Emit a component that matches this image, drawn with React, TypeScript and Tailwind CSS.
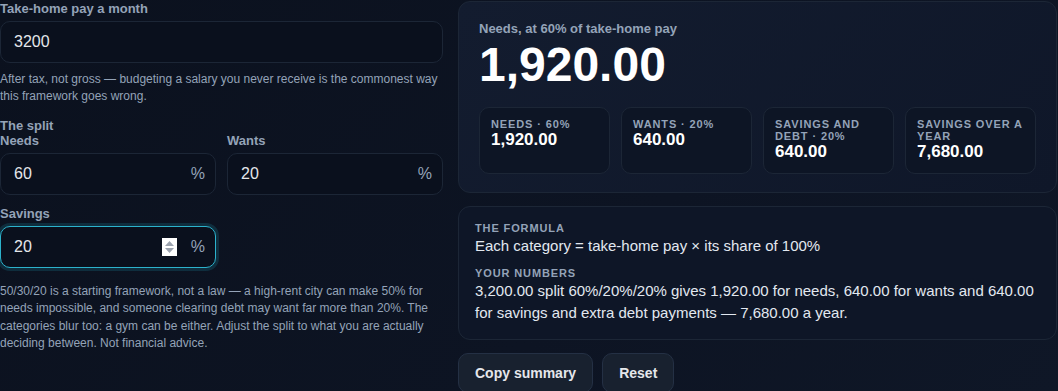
import React, { useState } from 'react';

const fmt = (n: number) =>
  n.toLocaleString('en-US', { minimumFractionDigits: 2, maximumFractionDigits: 2 });

interface PercentFieldProps {
  label: string;
  value: string;
  focused?: boolean;
  onChange: (v: string) => void;
}

const PercentField: React.FC<PercentFieldProps> = ({ label, value, focused, onChange }) => (
  <div className="flex flex-col">
    <span className="text-[13px] font-bold leading-[15px] text-[#94a3b8]">{label}</span>
    <div
      className={`mt-[5px] flex h-[42px] items-center rounded-[10px] border bg-[#0a101d] pl-[13px] pr-[10px] ${
        focused
          ? 'border-[#2cb2cc] shadow-[0_0_0_3px_rgba(34,211,238,0.14)]'
          : 'border-[#1c2636]'
      }`}
    >
      <input
        value={value}
        onChange={(e) => onChange(e.target.value)}
        className="w-full min-w-0 bg-transparent text-[16px] text-[#e5e7eb] outline-none"
      />
      {focused && (
        // stand-in for the native number spinner
        <span className="mr-[14px] flex h-[18px] w-[15px] shrink-0 flex-col items-center justify-center gap-[2px] bg-white">
          <svg width="9" height="5" viewBox="0 0 9 5">
            <path d="M0 5 L4.5 0 L9 5 Z" fill="#9ca3af" />
          </svg>
          <svg width="9" height="5" viewBox="0 0 9 5">
            <path d="M0 0 L4.5 5 L9 0 Z" fill="#9ca3af" />
          </svg>
        </span>
      )}
      <span className="text-[16px] text-[#94a3b8]">%</span>
    </div>
  </div>
);

const StatCard: React.FC<{ label: string; value: string }> = ({ label, value }) => (
  <div className="flex flex-col rounded-[10px] border border-[#1c2636] bg-[#0d1525] pl-[11px] pr-[7px] pt-[10px] pb-[11px]">
    <span className="text-[11px] font-semibold uppercase leading-[12px] tracking-[0.08em] text-[#94a3b8]">
      {label}
    </span>
    <span className="text-[17px] font-bold leading-[20px] text-white">{value}</span>
  </div>
);

export default function App() {
  const [pay, setPay] = useState('3200');
  const [needs, setNeeds] = useState('60');
  const [wants, setWants] = useState('20');
  const [savings, setSavings] = useState('20');

  const p = parseFloat(pay) || 0;
  const n = parseFloat(needs) || 0;
  const w = parseFloat(wants) || 0;
  const s = parseFloat(savings) || 0;
  const needsAmt = (p * n) / 100;
  const wantsAmt = (p * w) / 100;
  const savingsAmt = (p * s) / 100;

  const reset = () => {
    setPay('3200');
    setNeeds('60');
    setWants('20');
    setSavings('20');
  };

  return (
    <div
      className="flex min-h-[391px] w-full gap-[15px] bg-[linear-gradient(135deg,#0b111e_0%,#0d1423_60%,#0f1727_100%)] pr-[1px] text-[#e5e7eb]"
      style={{ fontFamily: '"Liberation Sans", Arial, sans-serif' }}
    >
      {/* inputs */}
      <div className="flex w-[443px] shrink-0 flex-col">
        <label className="text-[13px] font-bold leading-[18px] text-[#94a3b8]">Take-home pay a month</label>
        <input
          value={pay}
          onChange={(e) => setPay(e.target.value)}
          className="mt-[3px] h-[42px] rounded-[10px] border border-[#1c2636] bg-[#0a101d] px-[13px] text-[16px] text-[#e5e7eb] outline-none"
        />
        <p className="mt-[8px] text-[12px] leading-[17px] text-[#94a3b8]">
          After tax, not gross — budgeting a salary you never receive is the commonest way this framework goes wrong.
        </p>

        <span className="mt-[13px] text-[13px] font-bold leading-[15px] text-[#94a3b8]">The split</span>
        <div className="grid grid-cols-2 gap-x-[11px] gap-y-[11px]">
          <PercentField label="Needs" value={needs} onChange={setNeeds} />
          <PercentField label="Wants" value={wants} onChange={setWants} />
          <PercentField label="Savings" value={savings} onChange={setSavings} focused />
        </div>

        <p className="mt-[15px] text-[12px] leading-[17.3px] text-[#94a3b8]">
          50/30/20 is a starting framework, not a law — a high-rent city can make 50% for needs impossible, and
          someone clearing debt may want far more than 20%. The categories blur too: a gym can be either. Adjust the
          split to what you are actually deciding between. Not financial advice.
        </p>
      </div>

      {/* results */}
      <div className="flex flex-1 flex-col gap-[13px]">
        <div className="mt-[1px] rounded-[12px] border border-[#1c2636] bg-[linear-gradient(135deg,#131c2f_0%,#0f1729_100%)] px-[20px] pt-[19px] pb-[18px]">
          <div className="text-[13px] font-bold leading-[16px] text-[#94a3b8]">Needs, at {n}% of take-home pay</div>
          <div className="mt-[4px] text-[48px] font-bold leading-none text-white">{fmt(needsAmt)}</div>
          <div className="mt-[18px] grid grid-cols-4 gap-[11px]">
            <StatCard label={`Needs · ${n}%`} value={fmt(needsAmt)} />
            <StatCard label={`Wants · ${w}%`} value={fmt(wantsAmt)} />
            <StatCard label={`Savings and debt · ${s}%`} value={fmt(savingsAmt)} />
            <StatCard label="Savings over a year" value={fmt(savingsAmt * 12)} />
          </div>
        </div>

        <div className="rounded-[12px] border border-[#1c2636] bg-[#0e1627] pl-[16px] pr-[12px] pt-[14px] pb-[15px]">
          <div className="text-[11px] font-bold uppercase leading-[14px] tracking-[0.08em] text-[#94a3b8]">
            The formula
          </div>
          <div className="text-[15px] leading-[22px] text-[#e2e8f0]">
            Each category = take-home pay × its share of 100%
          </div>
          <div className="mt-[9px] text-[11px] font-bold uppercase leading-[14px] tracking-[0.08em] text-[#94a3b8]">
            Your numbers
          </div>
          <div className="text-[15px] leading-[22px] text-[#e2e8f0]">
            {fmt(p)} split {n}%/{w}%/{s}% gives {fmt(needsAmt)} for needs, {fmt(wantsAmt)} for wants and{' '}
            {fmt(savingsAmt)} for savings and extra debt payments — {fmt(savingsAmt * 12)} a year.
          </div>
        </div>

        <div className="flex gap-[9px]">
          <button className="h-[40px] rounded-[10px] border border-[#243044] bg-[#18212f] px-[16px] text-[14px] font-bold text-[#e5e7eb]">
            Copy summary
          </button>
          <button
            onClick={reset}
            className="h-[40px] rounded-[10px] border border-[#243044] bg-[#18212f] px-[16px] text-[14px] font-bold text-[#e5e7eb]"
          >
            Reset
          </button>
        </div>
      </div>
    </div>
  );
}
